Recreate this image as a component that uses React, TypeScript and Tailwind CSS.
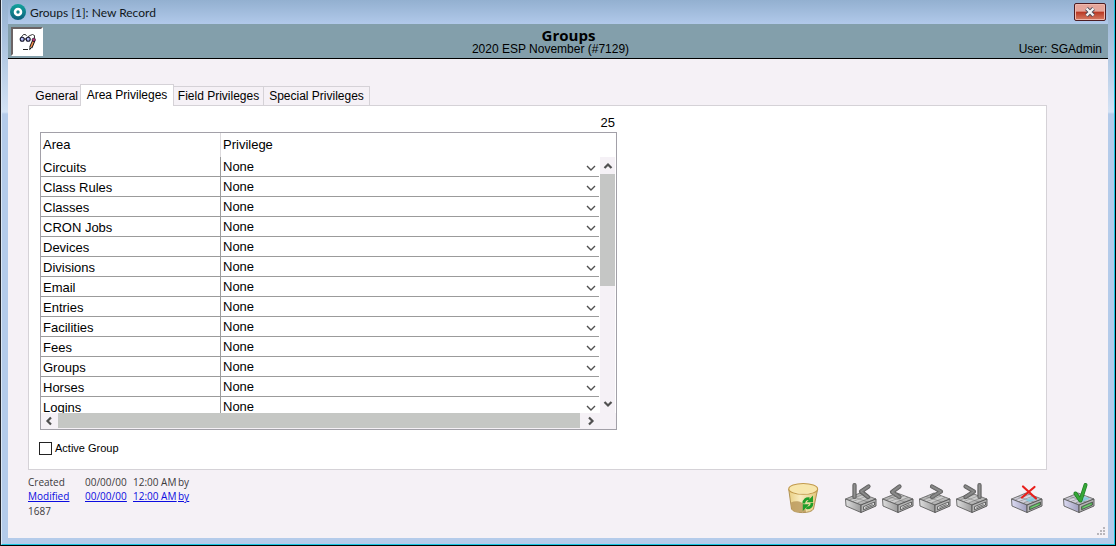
import type { ReactNode } from "react";

const areas = [
  "Circuits",
  "Class Rules",
  "Classes",
  "CRON Jobs",
  "Devices",
  "Divisions",
  "Email",
  "Entries",
  "Facilities",
  "Fees",
  "Groups",
  "Horses",
  "Logins",
];

const tabs = ["General", "Area Privileges", "Field Privileges", "Special Privileges"];

function AppLogo() {
  return (
    <svg width="16" height="16" viewBox="0 0 16 16" aria-hidden="true">
      <defs>
        <linearGradient id="logo" x1="0" y1="0" x2="0" y2="1">
          <stop offset="0" stopColor="#12a39b" />
          <stop offset="1" stopColor="#0b5f7c" />
        </linearGradient>
      </defs>
      <circle cx="8" cy="8" r="8" fill="url(#logo)" />
      <circle cx="8" cy="8" r="3" fill="none" stroke="#fff" strokeWidth="2.6" />
    </svg>
  );
}

function GlassesIcon() {
  return (
    <svg width="18" height="18" viewBox="0 0 18 18" fill="none" aria-hidden="true">
      <path d="M3 4.500 5.500 1.500H7.500L8.500 3M9.500 4 12 2.500 14.500 1.500 16.500 2.500V5" stroke="#222" strokeWidth=".9" />
      <circle cx="4.200" cy="6.300" r="2" fill="#b4bcf8" stroke="#15152a" strokeWidth="1.100" />
      <circle cx="10.200" cy="6.300" r="2" fill="#b4bcf8" stroke="#15152a" strokeWidth="1.100" />
      <path d="M6.300 6h1.800" stroke="#111" />
      <path d="M15.800 7.500 12.800 14.500" stroke="#111" strokeWidth="3.200" />
      <path d="M15.300 8.500 13 14" stroke="#f08a4c" strokeWidth="1.600" />
      <circle cx="15.800" cy="6.800" r="1.700" fill="#b0307a" stroke="#111" strokeWidth=".6" />
      <path d="m11.500 14-.3 3.200 2.300-1.800z" fill="#111" />
      <path d="M5 16.500h5" stroke="#222" />
    </svg>
  );
}

function Drive({ color = false, children }: { color?: boolean; children: ReactNode }) {
  return (
    <svg width="34" height="32" viewBox="0 0 34 32" fill="none" aria-hidden="true">
      <defs>
        <linearGradient id="driveTop" x1="0" y1="0" x2="1" y2="1">
          <stop offset="0" stopColor="#8f8f8f" />
          <stop offset=".5" stopColor="#d4d4d4" />
          <stop offset="1" stopColor="#7d7d7d" />
        </linearGradient>
        <linearGradient id="driveTopColor" x1="0" y1="0" x2="1" y2="1">
          <stop offset="0" stopColor="#a9a8b2" />
          <stop offset=".45" stopColor="#dcdae6" />
          <stop offset="1" stopColor="#92989a" />
        </linearGradient>
        <linearGradient id="driveSide" x1="0" y1="0" x2="1" y2="0">
          <stop offset="0" stopColor="#dedede" />
          <stop offset="1" stopColor="#9a9a9a" />
        </linearGradient>
        <linearGradient id="driveSideColor" x1="0" y1="0" x2="1" y2="0">
          <stop offset="0" stopColor="#dddcf4" />
          <stop offset="1" stopColor="#9f9ebc" />
        </linearGradient>
      </defs>
      <path d="M1.500 17 16 11 32 17 17 23Z" fill={color ? "url(#driveTopColor)" : "url(#driveTop)"} stroke="#6c6c6c" strokeWidth=".9" />
      <path d="M1.500 17 17 23V30.500L2 24Z" fill={color ? "url(#driveSideColor)" : "url(#driveSide)"} stroke="#606060" strokeWidth=".9" />
      <path d="M32 17 17 23V30.500L32 24Z" fill="#b4b4b4" stroke="#505050" strokeWidth=".9" />
      <path d="M19.500 24.700 30.500 20V23L19.500 27.800Z" fill={color ? "#4fae52" : "#dcdcdc"} stroke="#4c4c4c" strokeWidth=".8" />
      <path d="M21.500 25.500 28.500 22.500" stroke={color ? "#7fd07f" : "#6a6a6a"} strokeWidth="1" />
      <path d="M5 18 19 12.500M9 19.500 23 14M13.500 21 27 15.500M8 14.500 24 20" stroke="#5f5f5f" strokeOpacity=".5" strokeWidth=".8" />
      {color && <path d="m15 18 8-3.500 5 2-8 3.500z" fill="#7fd0e4" fillOpacity=".8" />}
      {children}
    </svg>
  );
}

function Glyph({ d }: { d: string }) {
  return (
    <g strokeLinecap="round" strokeLinejoin="round">
      <path d={d} stroke="#5a5a5a" strokeWidth="4.200" />
      <path d={d} stroke="#7c7c7c" strokeWidth="2.800" />
      <path d={d} stroke="#969696" strokeWidth=".8" />
    </g>
  );
}

function TrashIcon() {
  return (
    <svg width="34" height="32" viewBox="0 0 34 32" aria-hidden="true">
      <defs>
        <linearGradient id="bin" x1="0" y1="0" x2="1" y2="0">
          <stop offset="0" stopColor="#e9cf82" />
          <stop offset=".4" stopColor="#f8ecc0" />
          <stop offset="1" stopColor="#e2c67a" />
        </linearGradient>
      </defs>
      <path d="M1.700 7 4.500 27c2 4.800 20 4.800 22 0L30.700 7z" fill="url(#bin)" stroke="#a8894a" strokeWidth=".9" />
      <path d="M4 20.500c5-2.500 12-1 14 3.500l1 6c-6 .6-12.500-.2-14.300-3z" fill="#b8965a" fillOpacity=".8" />
      <ellipse cx="16.200" cy="6.900" rx="14.400" ry="5.400" fill="#f7e6ac" stroke="#c29a4c" strokeWidth="1.100" />
      <path d="M4 9c5 3 19 3 24.500 0-3 3.400-21 3.400-24.500 0z" fill="#fff6d6" />
      <g fill="none" stroke="#1f9e2a" strokeWidth="2.800">
        <path d="M16.800 21.500c0-3.600 2.500-5.300 5.700-4.700" />
        <path d="M25 21c0 3.600-2.500 5.300-5.700 4.700" />
      </g>
      <path d="M19.500 20.200 26 13.500v6.700zM22.300 22.300 15.800 29v-6.700z" fill="#1f9e2a" />
    </svg>
  );
}

function Chevron({ d, heavy = false }: { d: string; heavy?: boolean }) {
  return (
    <svg width="10" height="10" viewBox="0 0 10 10" fill="none" stroke="#505050" strokeWidth={heavy ? 2.2 : 1.4} aria-hidden="true">
      <path d={d} />
    </svg>
  );
}

const down = "M1 3 5 7 9 3";
const scrollDown = "M1.500 3 5 6.500 8.500 3";
const scrollUp = "M1.500 7 5 3.500 8.500 7";
const scrollLeft = "M7 1.500 3.500 5 7 8.500";
const scrollRight = "M3 1.500 6.500 5 3 8.500";

function TitleBar() {
  return (
    <header className="flex h-6 items-center bg-linear-to-b from-[#93b0d0] to-[#b1c9ea] pl-[2px]">
      <AppLogo />
      <h1 className="ml-1 flex-1 pt-[2px] font-[Lato,sans-serif] text-[12px] leading-5 text-[#111820]">Groups [1]: New Record</h1>
      <button
        aria-label="Close"
        className="mr-[2px] flex h-[18px] w-8 items-center justify-center rounded-[2px] border border-[#4c1c22] bg-linear-to-b from-[#e5a69c] from-45% via-[#b83521] via-50% to-[#d67b64] shadow-[inset_0_0_0_1px_#efb8ad]"
      >
        <svg width="12" height="10" viewBox="0 0 12 10" fill="none" aria-hidden="true">
          <path d="M2.500 1.500 9.500 8.500M9.500 1.500 2.500 8.500" stroke="#4b4a58" strokeWidth="4" />
          <path d="M2.500 1.500 9.500 8.500M9.500 1.500 2.500 8.500" stroke="#f4f4f4" strokeWidth="2.400" />
        </svg>
      </button>
    </header>
  );
}

function RecordHeader() {
  return (
    <div className="grid h-[35px] grid-cols-[1fr_auto_1fr] border-b border-black bg-[#839fab] pr-[6px] pl-[3px]">
      <button
        aria-label="Edit view"
        className="mt-[3px] flex h-[29px] w-8 items-center justify-center border-2 border-t-[#6b6465] border-r-white border-b-white border-l-[#6b6465] bg-white"
      >
        <GlassesIcon />
      </button>
      <div className="mr-3 pt-[3px] text-center">
        <h2 className="pl-9 font-['Open_Sans',sans-serif] text-[15px] leading-4 font-bold">Groups</h2>
        <p className="text-[12px] leading-[13px]">2020 ESP November (#7129)</p>
      </div>
      <p className="self-end pb-px text-right text-[12px] leading-4">User: SGAdmin</p>
    </div>
  );
}

function TabStrip() {
  return (
    <div role="tablist" className="ml-[2px] flex items-end">
      {tabs.map((tab) =>
        tab === "Area Privileges" ? (
          <button
            key={tab}
            role="tab"
            aria-selected="true"
            className="relative -mb-px h-[22px] w-[94px] border border-b-0 border-[#d5d2d7] bg-white pb-px text-[12px] leading-5"
          >
            {tab}
          </button>
        ) : (
          <button
            key={tab}
            role="tab"
            aria-selected="false"
            className="h-[19px] border-t border-[#d5d2d7] text-[12px] leading-[18px] first:w-[50px] first:pr-[2px] first:text-right nth-3:w-[90px] nth-3:border-r nth-4:w-[106px] nth-4:border-r"
          >
            {tab}
          </button>
        ),
      )}
    </div>
  );
}

function PrivilegeTable() {
  return (
    <div className="w-[577px] border border-[#a2a0a8] bg-[#f5f1f6]">
      <div className="flex">
        <div className="h-[280px] flex-1 overflow-hidden bg-white pr-px">
          <table className="w-full table-fixed border-separate border-spacing-0 text-[13px] leading-4">
            <colgroup>
              <col className="w-[180px]" />
              <col />
            </colgroup>
            <thead>
              <tr className="h-6">
                <th scope="col" className="border-r border-[#dcdadd] p-0 pl-[2px] text-left font-normal">Area</th>
                <th scope="col" className="p-0 pl-[2px] text-left font-normal">Privilege</th>
              </tr>
            </thead>
            <tbody>
              {areas.map((area, i) => (
                <tr key={area}>
                  <th scope="row" className="border-r border-b border-[#9b9b9b] p-0 pl-[2px] text-left font-normal">
                    <label htmlFor={`privilege-${i}`} className="block pt-[2px] leading-[17px]">{area}</label>
                  </th>
                  <td className="border-b border-[#9b9b9b] p-0">
                    <div className="grid grid-cols-[1fr_16px] items-center">
                      <select
                        id={`privilege-${i}`}
                        className="col-span-2 col-start-1 row-start-1 h-[19px] appearance-none bg-transparent pl-[2px] leading-[19px]"
                      >
                        <option>None</option>
                      </select>
                      <span className="pointer-events-none col-start-2 row-start-1 flex justify-center pt-[2px]">
                        <Chevron d={down} />
                      </span>
                    </div>
                  </td>
                </tr>
              ))}
            </tbody>
          </table>
        </div>
        <div className="flex w-4 flex-col bg-white pt-6 pr-px">
          <button aria-label="Scroll up" className="flex h-[17px] items-center justify-center bg-[#f5f1f6]">
            <Chevron d={scrollUp} heavy />
          </button>
          <div className="flex-1 bg-[#f5f1f6]">
            <div className="h-28 bg-[#c5c6c5]" />
          </div>
          <button aria-label="Scroll down" className="flex h-[18px] items-center justify-center bg-[#f5f1f6]">
            <Chevron d={scrollDown} heavy />
          </button>
        </div>
      </div>
      <div className="flex h-4 pr-[17px] pb-px">
        <button aria-label="Scroll left" className="flex w-[17px] items-center justify-center pr-px">
          <Chevron d={scrollLeft} heavy />
        </button>
        <div className="mr-[3px] flex-1 bg-[#c5c7c4]" />
        <button aria-label="Scroll right" className="flex w-4 items-center justify-center">
          <Chevron d={scrollRight} heavy />
        </button>
      </div>
    </div>
  );
}

function RecordInfo() {
  return (
    <div className="pt-[5px] font-['Open_Sans',sans-serif] text-[10px] leading-[14px] text-[#3c3a3c]">
      <div className="grid grid-cols-[57px_48px_45px_auto]">
        <span>Created</span>
        <span>00/00/00</span>
        <span>12:00 AM</span>
        <span>by</span>
      </div>
      <div className="grid grid-cols-[57px_48px_45px_auto] text-[#0c0ce0] underline">
        <a href="#modified">Modified</a>
        <a href="#modified-date">00/00/00</a>
        <a href="#modified-time">12:00 AM</a>
        <a href="#modified-by">by</a>
      </div>
      <p className="pt-px">1687</p>
    </div>
  );
}

function Toolbar() {
  return (
    <div className="flex items-start pt-3">
      <button aria-label="Delete record" className="mr-[23px]">
        <TrashIcon />
      </button>
      <div className="mr-[21px] flex gap-[3px]">
        <button aria-label="First record">
          <Drive>
            <Glyph d="M10.500 3V15M24.500 4.500 17 9.500 24 15" />
          </Drive>
        </button>
        <button aria-label="Previous record">
          <Drive>
            <Glyph d="M18.500 4.500 11 10 18.500 15" />
          </Drive>
        </button>
        <button aria-label="Next record">
          <Drive>
            <Glyph d="M14 4.500 23 9.500 14 15" />
          </Drive>
        </button>
        <button aria-label="Last record">
          <Drive>
            <Glyph d="M10.500 4.500 19 9.500 10.500 15M24.500 3V15" />
          </Drive>
        </button>
      </div>
      <button aria-label="Cancel" className="mr-[18px]">
        <Drive color>
          <path d="M13 4.500 26 16.500M24.500 5 12 15.500" stroke="#e8201c" strokeWidth="2.200" strokeLinecap="round" />
        </Drive>
      </button>
      <button aria-label="Save">
        <Drive color>
          <path d="M13.500 11.500 18.500 18.500 23.500 3" stroke="#1c7c22" strokeWidth="4" strokeLinecap="round" strokeLinejoin="round" />
          <path d="M13.500 11.500 18.500 18.500 23.500 3" stroke="#35a637" strokeWidth="2.600" strokeLinecap="round" strokeLinejoin="round" />
        </Drive>
      </button>
    </div>
  );
}

export default function App() {
  return (
    <div className="flex min-h-screen flex-col border-r border-b border-l border-black border-l-[#23242c] bg-[#b4cbea] font-['Liberation_Sans',Arial,sans-serif] text-black">
      <div className="flex flex-1 flex-col border-r border-b border-l border-[#18c4e0] border-l-[#dce8f5] bg-linear-to-b from-[#93b0d0] via-[#d3e2f5] via-[112px] to-[#b4cbea] to-[114px] px-[6px] pb-[6px]">
        <TitleBar />
        <main className="flex flex-1 flex-col bg-[#f5f1f6]">
          <RecordHeader />
          <div className="mr-[61px] ml-5 pt-[25px]">
            <TabStrip />
            <section className="border border-[#d5d2d7] bg-white px-[11px] pt-2 pb-[14px]">
              <p className="w-[575px] pb-px text-right text-[13px] leading-[17px]">25</p>
              <PrivilegeTable />
              <label className="mt-3 flex w-fit items-center text-[11px] leading-[13px]">
                <input type="checkbox" className="mr-[3px] -ml-px size-[13px] appearance-none border border-[#222] bg-white" />
                Active Group
              </label>
            </section>
          </div>
          <footer className="flex flex-1 justify-between pr-3 pl-5">
            <RecordInfo />
            <Toolbar />
          </footer>
          <svg width="10" height="10" viewBox="0 0 10 10" className="mr-[2px] mb-px self-end" fill="#b9b6bb" aria-hidden="true">
            <path d="M7 0h2v2h-2zM4 3h2v2h-2zM7 3h2v2h-2zM1 6h2v2h-2zM4 6h2v2h-2zM7 6h2v2h-2z" />
          </svg>
        </main>
      </div>
    </div>
  );
}
